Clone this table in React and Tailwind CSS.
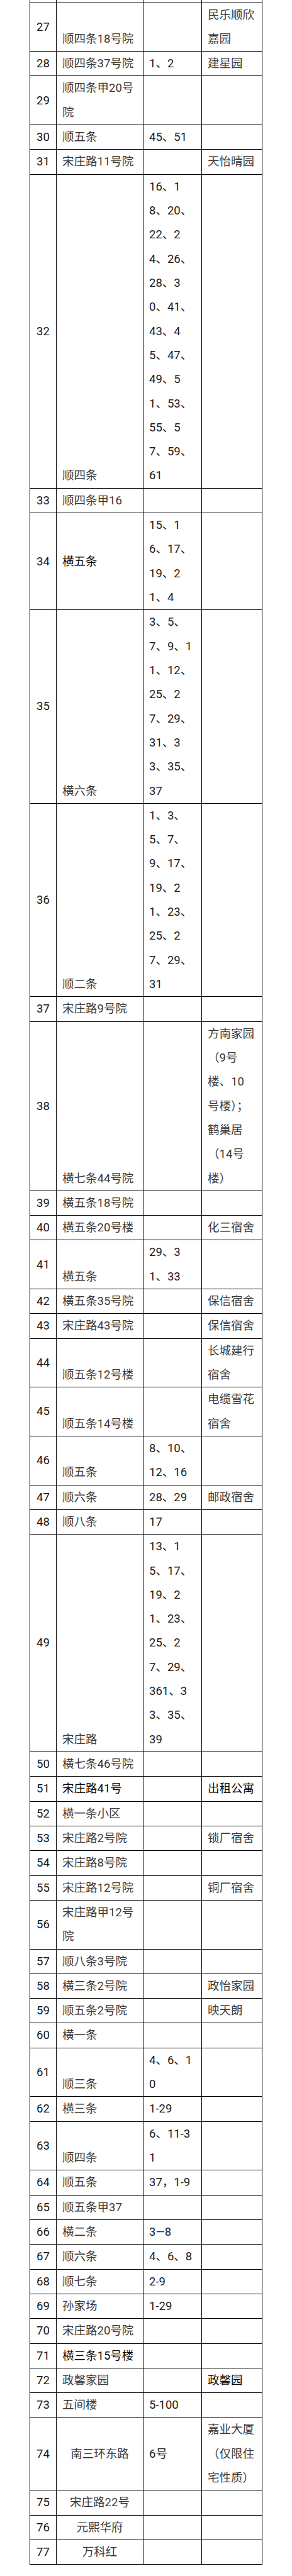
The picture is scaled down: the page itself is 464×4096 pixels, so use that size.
import React from "react";

const rows = [
  { n: "27", a: ["顺四条18号院"], av: "end", c: [], d: ["民乐顺欣", "嘉园"] },
  { n: "28", a: ["顺四条37号院"], c: ["1、2"], d: ["建星园"] },
  { n: "29", a: ["顺四条甲20号", "院"], c: [], d: [] },
  { n: "30", a: ["顺五条"], c: ["45、51"], d: [] },
  { n: "31", a: ["宋庄路11号院"], c: [], d: ["天怡晴园"] },
  {
    n: "32",
    a: ["顺四条"],
    av: "end",
    c: ["16、1", "8、20、", "22、2", "4、26、", "28、3", "0、41、", "43、4", "5、47、", "49、5", "1、53、", "55、5", "7、59、", "61"],
    d: [],
  },
  { n: "33", a: ["顺四条甲16"], c: [], d: [] },
  { n: "34", a: ["横五条"], dark: true, c: ["15、1", "6、17、", "19、2", "1、4"], d: [] },
  { n: "35", a: ["横六条"], av: "end", c: ["3、5、", "7、9、1", "1、12、", "25、2", "7、29、", "31、3", "3、35、", "37"], d: [] },
  { n: "36", a: ["顺二条"], av: "end", c: ["1、3、", "5、7、", "9、17、", "19、2", "1、23、", "25、2", "7、29、", "31"], d: [] },
  { n: "37", a: ["宋庄路9号院"], c: [], d: [] },
  {
    n: "38",
    a: ["横七条44号院"],
    av: "end",
    c: [],
    d: ["方南家园", "（9号", "楼、10", "号楼）；", "鹤巢居", "（14号", "楼）"],
  },
  { n: "39", a: ["横五条18号院"], c: [], d: [] },
  { n: "40", a: ["横五条20号楼"], c: [], d: ["化三宿舍"] },
  { n: "41", a: ["横五条"], av: "end", c: ["29、3", "1、33"], d: [] },
  { n: "42", a: ["横五条35号院"], c: [], d: ["保信宿舍"] },
  { n: "43", a: ["宋庄路43号院"], c: [], d: ["保信宿舍"] },
  { n: "44", a: ["顺五条12号楼"], av: "end", c: [], d: ["长城建行", "宿舍"] },
  { n: "45", a: ["顺五条14号楼"], av: "end", c: [], d: ["电缆雪花", "宿舍"] },
  { n: "46", a: ["顺五条"], av: "end", c: ["8、10、", "12、16"], d: [] },
  { n: "47", a: ["顺六条"], c: ["28、29"], d: ["邮政宿舍"] },
  { n: "48", a: ["顺八条"], c: ["17"], d: [] },
  {
    n: "49",
    a: ["宋庄路"],
    av: "end",
    c: ["13、1", "5、17、", "19、2", "1、23、", "25、2", "7、29、", "361、3", "3、35、", "39"],
    d: [],
  },
  { n: "50", a: ["横七条46号院"], c: [], d: [] },
  { n: "51", a: ["宋庄路41号"], dark: true, c: [], d: ["出租公寓"], ddark: true },
  { n: "52", a: ["横一条小区"], c: [], d: [] },
  { n: "53", a: ["宋庄路2号院"], c: [], d: ["锁厂宿舍"] },
  { n: "54", a: ["宋庄路8号院"], c: [], d: [] },
  { n: "55", a: ["宋庄路12号院"], c: [], d: ["铜厂宿舍"] },
  { n: "56", a: ["宋庄路甲12号", "院"], c: [], d: [] },
  { n: "57", a: ["顺八条3号院"], c: [], d: [] },
  { n: "58", a: ["横三条2号院"], c: [], d: ["政怡家园"] },
  { n: "59", a: ["顺五条2号院"], c: [], d: ["映天朗"] },
  { n: "60", a: ["横一条"], c: [], d: [] },
  { n: "61", a: ["顺三条"], av: "end", c: ["4、6、1", "0"], d: [] },
  { n: "62", a: ["横三条"], c: ["1-29"], d: [] },
  { n: "63", a: ["顺四条"], av: "end", c: ["6、11-3", "1"], d: [] },
  { n: "64", a: ["顺五条"], c: ["37，1-9"], d: [] },
  { n: "65", a: ["顺五条甲37"], c: [], d: [] },
  { n: "66", a: ["横二条"], c: ["3—8"], d: [] },
  { n: "67", a: ["顺六条"], c: ["4、6、8"], d: [] },
  { n: "68", a: ["顺七条"], c: ["2-9"], d: [] },
  { n: "69", a: ["孙家场"], c: ["1-29"], d: [] },
  { n: "70", a: ["宋庄路20号院"], c: [], d: [] },
  { n: "71", a: ["横三条15号楼"], dark: true, c: [], d: [] },
  { n: "72", a: ["政馨家园"], c: [], d: ["政馨园"], ddark: true },
  { n: "73", a: ["五间楼"], c: ["5-100"], d: [] },
  { n: "74", a: ["南三环东路"], ah: "center", c: ["6号"], d: ["嘉业大厦", "（仅限住", "宅性质）"] },
  { n: "75", a: ["宋庄路22号"], ah: "center", c: [], d: [] },
  { n: "76", a: ["元熙华府"], ah: "center", c: [], d: [] },
  { n: "77", a: ["万科红"], ah: "center", c: [], d: [] },
];

function Lines({ items }) {
  return items.map((t, i) => (
    <div key={i} className="whitespace-nowrap">
      {t}
    </div>
  ));
}

export default function App() {
  return (
    <div className="w-[464px] min-h-[4096px] bg-white font-[family-name:Roboto,'Noto_Sans_CJK_SC',sans-serif] text-[18.5px] leading-[38.32px]">
      <div className="ml-[47px] w-[370px] grid grid-cols-[41px_137px_92px_95px] gap-px bg-black px-px pb-px">
        <div className="h-[3.5px] bg-white"></div>
        <div className="h-[3.5px] bg-white"></div>
        <div className="h-[3.5px] bg-white"></div>
        <div className="h-[3.5px] bg-white"></div>
        {rows.map((r) => (
          <React.Fragment key={r.n}>
            <div className="bg-white flex items-center justify-center text-[#151515]">{r.n}</div>
            <div
              className={
                "bg-white flex flex-col " +
                (r.av === "end" ? "justify-end " : "justify-center ") +
                (r.ah === "center" ? "items-center " : "items-start pl-[9px] ") +
                (r.dark ? "text-[#0a0a0a]" : "text-[#3a3a3a]")
              }
            >
              <Lines items={r.a} />
            </div>
            <div className="bg-white flex flex-col justify-center pl-[9px] text-[#1c1c1c]">
              <Lines items={r.c} />
            </div>
            <div
              className={
                "bg-white flex flex-col justify-center pl-[9px] " +
                (r.ddark ? "text-[#0a0a0a]" : "text-[#3a3a3a]")
              }
            >
              <Lines items={r.d} />
            </div>
          </React.Fragment>
        ))}
      </div>
    </div>
  );
}
